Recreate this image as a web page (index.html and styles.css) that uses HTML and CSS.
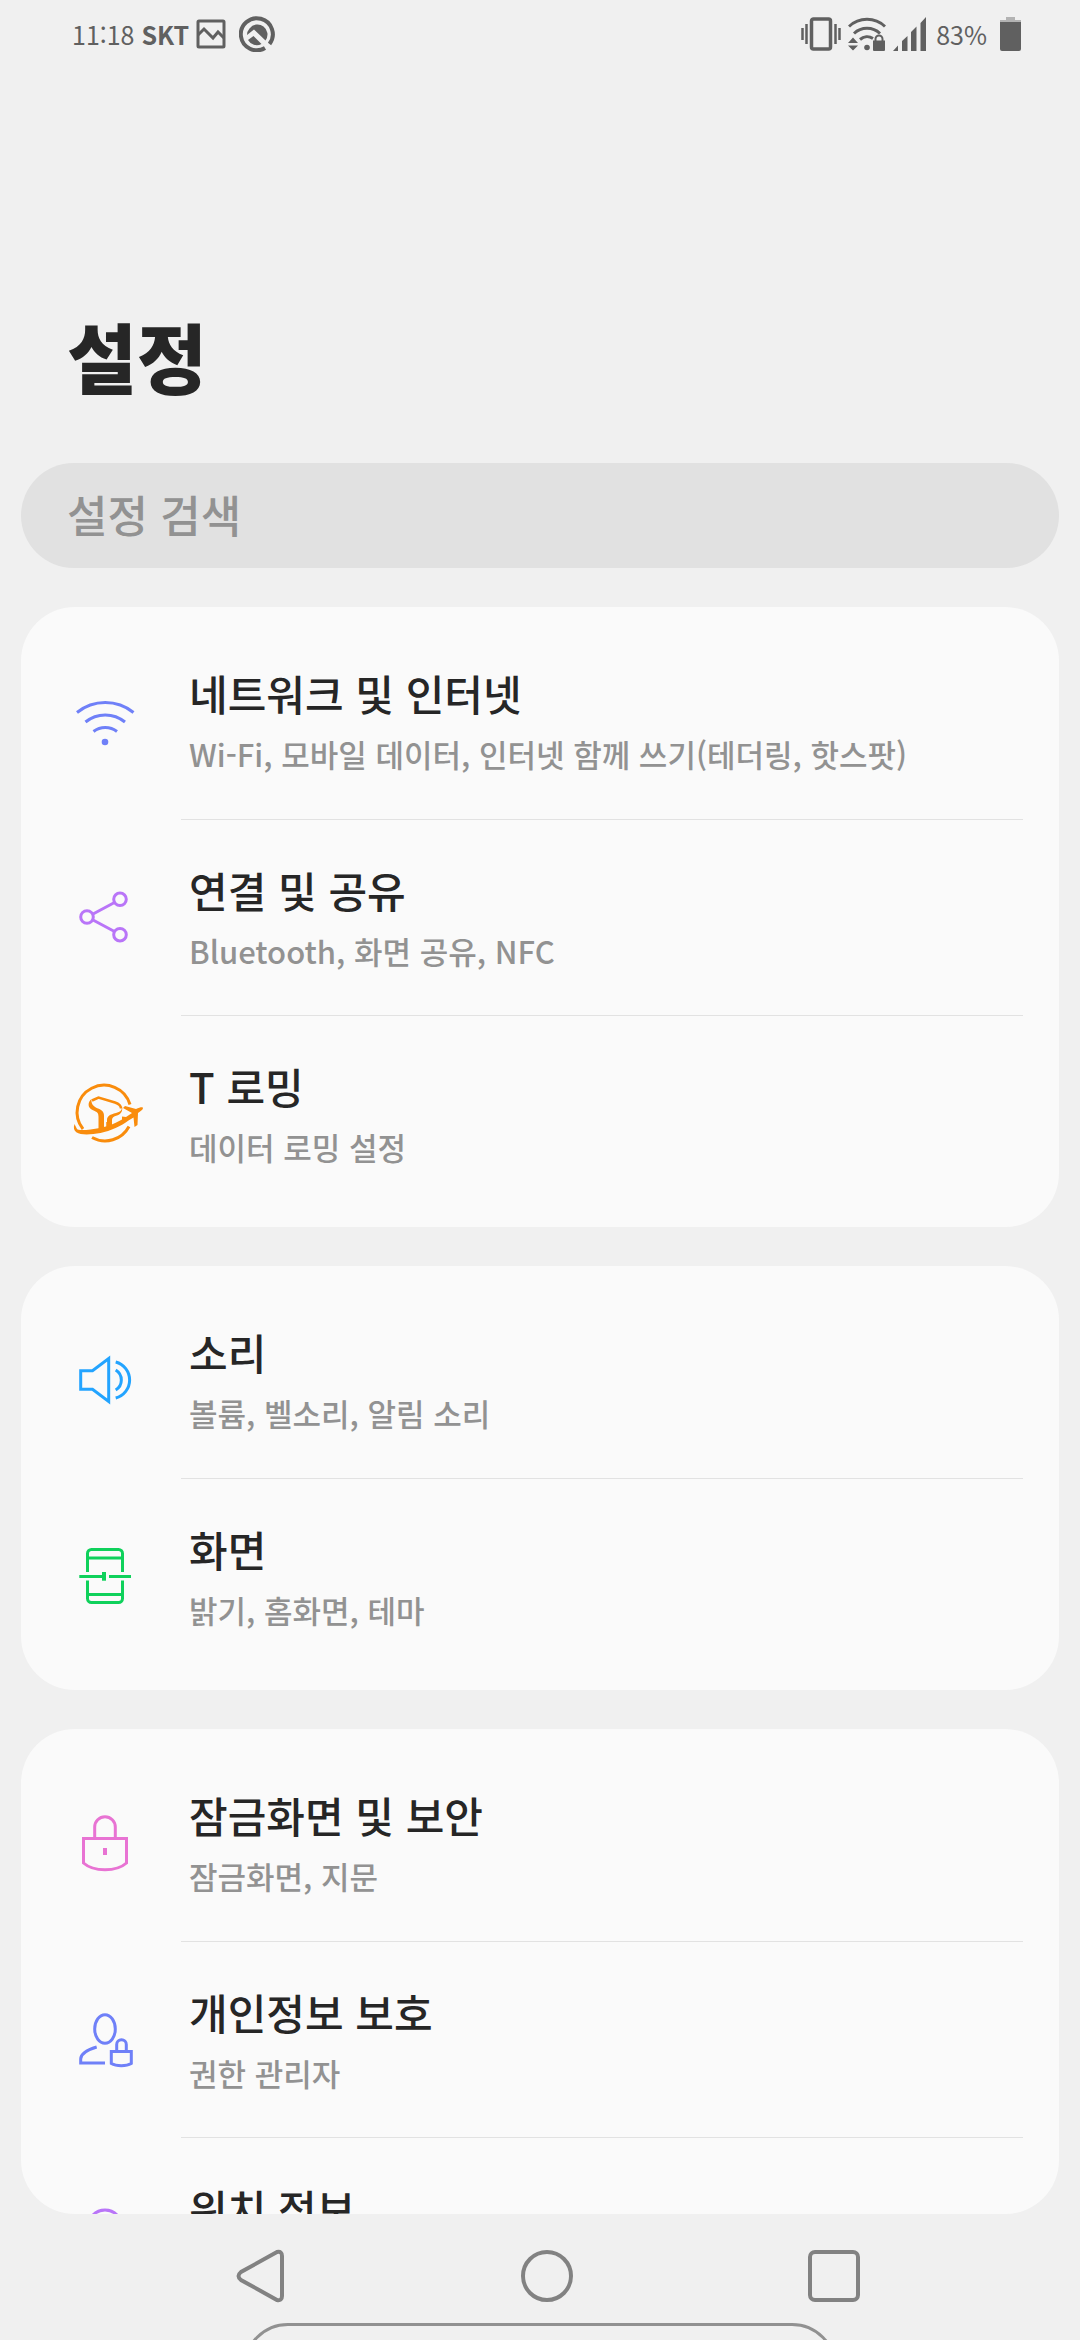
FILE: index.html
```html
<!DOCTYPE html>
<html lang="ko">
<head>
<meta charset="utf-8">
<meta name="viewport" content="width=device-width, initial-scale=1">
<title>설정</title>
<link rel="stylesheet" href="styles.css">
</head>
<body>
<header class="status">
  <div class="status-side">
    <span class="time">11:18</span>
    <span class="carrier">SKT</span>
    <svg class="shot" width="30" height="30" viewBox="0 0 30 30" fill="none" stroke="currentColor" stroke-width="3"><rect x="2" y="2" width="26" height="26" rx="1"/><path d="M2 16l6-6 9 9 5-6 6 6"/></svg>
    <svg width="36" height="36" viewBox="0 0 36 36"><path d="M26 32A16 16 0 1 1 30.500 28" fill="none" stroke="currentColor" stroke-width="4"/><path d="M10.500 12.500A9.500 9.500 0 0 1 26.500 24.500L15 13.500 8 19A10 10 0 0 1 10.500 12.500zM14.500 20l8 8A10 10 0 0 1 9 24z" fill="currentColor"/></svg>
  </div>
  <div class="status-side">
    <svg width="40" height="34" viewBox="0 0 40 34" fill="none" stroke="currentColor"><rect x="10.500" y="2" width="19" height="30" rx="2" stroke-width="3.500"/><path d="M1.500 11v12M5.500 7v20M34.500 7v20M38.500 11v12" stroke-width="2.500"/></svg>
    <svg width="38" height="34" viewBox="0 0 38 34"><g fill="none" stroke="currentColor" stroke-width="3"><path d="M1 9.500a26 26 0 0 1 36 0M6 16.500a19 19 0 0 1 26 0M12 22.500a11 11 0 0 1 13-1"/></g><path d="M0 26l5-5.500 5 5.500zM0 28.500h10l-5 5zM25 23.500h12V33a1 1 0 0 1-1 1H26a1 1 0 0 1-1-1z" fill="currentColor"/><path d="M27.500 24v-2a3.500 3.500 0 0 1 7 0v2" fill="none" stroke="currentColor" stroke-width="2"/><circle cx="19" cy="30.500" r="2.800" fill="currentColor"/></svg>
    <svg width="34" height="34" viewBox="0 0 34 34" fill="currentColor"><path d="M0 34l5-5.500V34zM9 34V24l5.500-5v15zM18 34V15l5.500-5.500V34zM27.500 34V6L33 0v34z"/></svg>
    <span class="percent">83%</span>
    <svg class="battery" width="22" height="34" viewBox="0 0 22 34"><path d="M6 0h9v3h6v3H0V3h6z" fill="#b3b3b3"/><path d="M0 5h21v27a2 2 0 0 1-2 2H2a2 2 0 0 1-2-2z" fill="currentColor"/></svg>
  </div>
</header>

<main class="page">
  <h1 class="title">설정</h1>
  <input class="search" type="search" placeholder="설정 검색" aria-label="설정 검색">

  <div class="groups">
  <ul class="card">
    <li><a class="row" href="#network">
      <svg class="icon indigo" viewBox="0 0 80 80"><path d="M12 31.500a45 45 0 0 1 56.500 0M20.500 41a31 31 0 0 1 39.500 0M28.500 50.500a19 19 0 0 1 23.500 0"/><circle class="solid" cx="40" cy="61" r="3.300"/></svg>
      <span class="text"><span class="name">네트워크 및 인터넷</span><span class="desc">Wi-Fi, 모바일 데이터, 인터넷 함께 쓰기(테더링, 핫스팟)</span></span>
    </a></li>
    <li><a class="row" href="#sharing">
      <svg class="icon violet" viewBox="0 0 80 80"><circle cx="55" cy="22.300" r="6.300"/><circle cx="22" cy="40" r="6.300"/><circle cx="55" cy="57.700" r="6.300"/><path d="M28 37l21.500-11.500M28 43l21.500 11.500"/></svg>
      <span class="text"><span class="name">연결 및 공유</span><span class="desc">Bluetooth, 화면 공유, NFC</span></span>
    </a></li>
    <li><a class="row" href="#roaming">
      <svg class="icon orange" viewBox="0 0 80 80"><path d="M18 56A27 27 0 1 1 65 31.500M64 53.500A27 27 0 0 1 27 64.500"/><path class="solid" d="M9.500 51c-4 12 12 11.500 26 9 10-2 21-7 28-12.500l5-3 1 9.500 3-2 .5-12c3-2 5-3.500 5-5s-3-1-7 1l-11-3-2 2 9 5-6 4-4-.5v3c-7 4-14 7-22 8.500-10 2-22 3-23 1z"/><path d="M27 27.500l6.500-3 16.500 5c4.500 1.500 6 3 6 6M42.500 55.500V49" stroke-width="2.500"/><path class="solid" d="M26.500 26c-4 3-4 9 1 11 5 2 6 3 6 7v14l5.500-1V43c0-4-2-6-6-7.500-5-2-7-5-6.500-9.500zM57 33c.5 4-2 6-6 7-6 1.500-9 3-9 7v9l5-2v-7c0-2.500 1.500-3.500 5-4.500 4-1.500 6-4 5-9.500z"/></svg>
      <span class="text"><span class="name">T 로밍</span><span class="desc">데이터 로밍 설정</span></span>
    </a></li>
  </ul>

  <ul class="card">
    <li><a class="row" href="#sound">
      <svg class="icon blue" viewBox="0 0 80 80"><path d="M15.700 30.700h11.800L43.700 18.500v43L27.500 49.300H15.700zM50.700 22a18.600 18.600 0 0 1 0 36M50.700 30a11.700 11.700 0 0 1 0 20"/></svg>
      <span class="text"><span class="name">소리</span><span class="desc">볼륨, 벨소리, 알림 소리</span></span>
    </a></li>
    <li><a class="row" href="#display">
      <svg class="icon green" viewBox="0 0 80 80"><path d="M22.500 36V17.500a4 4 0 0 1 4-4h27a4 4 0 0 1 4 4V36M22.500 44.500v18a4 4 0 0 0 4 4h27a4 4 0 0 0 4-4v-18M22.500 22h35M22.500 58.500h35M14.300 40.500H40M44 40.500h22"/><path d="M39 36v8.700" stroke-width="4"/></svg>
      <span class="text"><span class="name">화면</span><span class="desc">밝기, 홈화면, 테마</span></span>
    </a></li>
  </ul>

  <ul class="card">
    <li><a class="row" href="#security">
      <svg class="icon pink" viewBox="0 0 80 80"><path d="M29.700 35V24a10.300 10.300 0 0 1 20.600 0v11M18.500 35.500h43V60c-10 9-33 9-43 0z"/><path class="solid" d="M38 45h4v7h-4z"/></svg>
      <span class="text"><span class="name">잠금화면 및 보안</span><span class="desc">잠금화면, 지문</span></span>
    </a></li>
    <li><a class="row" href="#privacy">
      <svg class="icon indigo" viewBox="0 0 80 80"><ellipse cx="40" cy="30" rx="10.300" ry="14.300"/><path d="M31.700 48c-10 3-16 7-16 12v4H40M46.300 52.500h20V64.500c-5 3-15 3-20 0zM51.700 52V45.500a4.800 4.800 0 0 1 9.600 0V52"/></svg>
      <span class="text"><span class="name">개인정보 보호</span><span class="desc">권한 관리자</span></span>
    </a></li>
    <li><a class="row" href="#location">
      <svg class="icon violet" viewBox="0 0 80 80"><path d="M40 67C30 54 23 42 23 32a17 17 0 0 1 34 0c0 10-7 22-17 35z"/><circle cx="40" cy="32" r="6"/></svg>
      <span class="text"><span class="name">위치 정보</span><span class="desc"></span></span>
    </a></li>
  </ul>
  </div>
</main>

<nav class="nav">
  <div class="keys">
    <button class="key" aria-label="뒤로"><svg width="54" height="54" viewBox="0 0 54 54"><path d="M44 3L8 23q-5 4 0 8l36 20q5 1 5-4V7q0-5-5-4z"/></svg></button>
    <button class="key" aria-label="홈"><svg width="54" height="54" viewBox="0 0 54 54"><circle cx="27" cy="27" r="24"/></svg></button>
    <button class="key" aria-label="최근 앱"><svg width="54" height="54" viewBox="0 0 54 54"><rect x="3" y="3" width="48" height="48" rx="5"/></svg></button>
  </div>
  <div class="handle"></div>
</nav>
</body>
</html>
```
FILE: styles.css
```css
* { box-sizing: border-box; }

body {
  margin: 0;
  height: 100vh;
  display: flex;
  flex-direction: column;
  overflow: hidden;
  background: #f0f0f0;
  color: #262626;
  font-family: "Noto Sans CJK KR", "Noto Sans", sans-serif;
}

.status {
  flex: none;
  display: flex;
  justify-content: space-between;
  height: 67px;
  padding: 0 58px 0 72px;
  color: #606060;
  font-size: 25px;
  line-height: 36px;
}
.status-side { display: flex; align-items: center; gap: 7px; }
.carrier { font-weight: 700; }
.shot { margin-right: 6px; }
.percent { margin-left: 2px; }
.battery { margin-left: 6px; }

.page {
  flex: 1;
  min-height: 0;
  display: flex;
  flex-direction: column;
  margin: 0 21px;
  border-radius: 0 0 54px 54px;
  overflow: hidden;
}

.title {
  flex: none;
  margin: 232px 0 52px;
  padding: 0 46px;
  font-size: 76px;
  line-height: 112px;
  font-weight: 900;
}

.search {
  flex: none;
  width: 100%;
  height: 105px;
  padding: 0 46px 4px;
  border: 0;
  border-radius: 53px;
  background: #e1e1e1;
  color: #262626;
  font: 500 44px "Noto Sans CJK KR", sans-serif;
  appearance: none;
}
.search::placeholder { color: #929292; opacity: 1; }

.groups {
  flex: none;
  display: flex;
  flex-direction: column;
  gap: 39px;
  padding-top: 39px;
}
.card {
  margin: 0;
  padding: 16px 36px 16px 44px;
  list-style: none;
  border-radius: 54px;
  background: #fafafa;
}
.row {
  display: flex;
  align-items: center;
  gap: 36px;
  height: 196px;
  color: inherit;
  text-decoration: none;
}
.icon {
  flex: none;
  width: 80px;
  height: 80px;
  fill: none;
  stroke: currentColor;
  stroke-width: 3;
}
.icon .solid { fill: currentColor; stroke: none; }
.indigo { color: #6f80f8; }
.violet { color: #b975f8; }
.orange { color: #f98c0c; }
.blue { color: #23a4ff; }
.green { color: #0fd15b; }
.pink { color: #e873d3; }

.text {
  flex: 1;
  align-self: stretch;
  display: flex;
  flex-direction: column;
  padding: 35px 0 0 8px;
  white-space: nowrap;
}
li + li .text { border-top: 1px solid #e2e2e2; }
.name { font-size: 42px; line-height: 70px; font-weight: 500; }
.desc { font-size: 31px; line-height: 52px; font-weight: 500; color: #929292; }

.nav {
  flex: none;
  display: flex;
  flex-direction: column;
  height: 126px;
  padding-top: 35px;
  overflow: hidden;
}
.keys {
  flex: none;
  display: grid;
  grid-template-columns: repeat(3, 1fr);
  justify-items: center;
  padding: 0 103px 0 117px;
}
.key {
  display: flex;
  padding: 0;
  border: 0;
  background: none;
  color: #828282;
}
.key svg { fill: none; stroke: currentColor; stroke-width: 4; }
.handle {
  flex: none;
  align-self: center;
  width: 55%;
  height: 90px;
  margin-top: 20px;
  border: 3px solid #919191;
  border-radius: 45px;
}
```
